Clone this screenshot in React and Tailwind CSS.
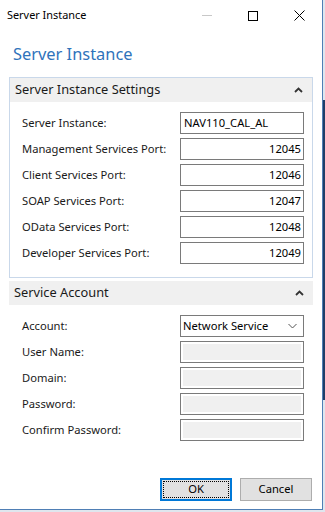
import React from 'react';

const font = { fontFamily: '"Noto Sans", "Open Sans", "Liberation Sans", sans-serif' };

const settings = [
  { label: 'Server Instance:', value: 'NAV110_CAL_AL', left: true },
  { label: 'Management Services Port:', value: '12045' },
  { label: 'Client Services Port:', value: '12046' },
  { label: 'SOAP Services Port:', value: '12047' },
  { label: 'OData Services Port:', value: '12048' },
  { label: 'Developer Services Port:', value: '12049' },
];

const accountFields = ['User Name:', 'Domain:', 'Password:', 'Confirm Password:'];

const ChevronUp = () => (
  <svg width="9" height="6" viewBox="0 0 9 6" className="mr-[9px]">
    <path d="M1 5 L4.5 1.5 L8 5" fill="none" stroke="#333" strokeWidth="1.8" />
  </svg>
);

const SectionHeader = ({ title }) => (
  <div className="flex h-[24px] items-center justify-between bg-[#f0f0f0] pl-[5px] text-[12.8px] text-[#1a1a1a]">
    <span>{title}</span>
    <ChevronUp />
  </div>
);

const Row = ({ label, children }) => (
  <div className="flex h-[22px] items-center">
    <span className="w-[158px] text-[11.2px] text-[#1a1a1a]">{label}</span>
    {children}
  </div>
);

const App = () => {
  return (
    <div className="relative h-[512px] w-[325px] bg-[#dfe6ee]" style={font}>
      <div className="flex h-[510px] w-[323px] flex-col border-r border-b border-[#4f7fb5] bg-white">
        {/* Title bar */}
        <div className="flex h-[31px] items-center pl-[7px] text-[10.9px] text-black">
          <span className="flex-1">Server Instance</span>
          <div className="flex h-full items-center">
            <div className="flex w-[46px] justify-center">
              <div className="h-px w-[10px] bg-[#c8c8c8]" />
            </div>
            <div className="flex w-[46px] justify-center">
              <div className="h-[10px] w-[10px] border border-black" />
            </div>
            <div className="flex w-[46px] justify-center">
              <svg width="11" height="11" viewBox="0 0 11 11">
                <path d="M0.5 0.5 L10.5 10.5 M10.5 0.5 L0.5 10.5" stroke="#000" strokeWidth="1" />
              </svg>
            </div>
          </div>
        </div>

        {/* Heading */}
        <div className="pl-[13px] pt-[11px] text-[16.4px] leading-[24px] text-[#2f73bb]">Server Instance</div>

        {/* Server Instance Settings */}
        <div className="ml-[9px] mt-[11px] w-[304px] border border-[#c9d8ea]">
          <SectionHeader title="Server Instance Settings" />
          <div className="flex flex-col gap-[4px] pb-[13px] pl-[12px] pr-[8px] pt-[10px]">
            {settings.map((s) => (
              <Row key={s.label} label={s.label}>
                <div
                  className={
                    'flex h-[22px] flex-1 items-center border border-[#7a7a7a] text-[11.2px] text-black ' +
                    (s.left ? 'justify-start pl-[3px]' : 'justify-end pr-[2px]')
                  }
                >
                  {s.value}
                </div>
              </Row>
            ))}
          </div>
        </div>

        {/* Service Account */}
        <div className="ml-[9px] mt-[3px] w-[304px]">
          <SectionHeader title="Service Account" />
          <div className="flex flex-col gap-[4px] pl-[13px] pr-[9px] pt-[10px]">
            <Row label="Account:">
              <div className="flex h-[22px] flex-1 items-center justify-between border border-[#7a7a7a] pl-[2px] pr-[6px] text-[11.2px] text-black">
                <span>Network Service</span>
                <svg width="9" height="6" viewBox="0 0 9 6">
                  <path d="M0.5 1 L4.5 5 L8.5 1" fill="none" stroke="#555" strokeWidth="1" />
                </svg>
              </div>
            </Row>
            {accountFields.map((f) => (
              <Row key={f} label={f}>
                <div className="h-[22px] flex-1 border border-[#7a7a7a] p-[2px]">
                  <div className="h-full w-full bg-[#f0f0f0]" />
                </div>
              </Row>
            ))}
          </div>
        </div>

        {/* Buttons */}
        <div className="mt-auto flex justify-end gap-[8px] pb-[8px] pr-[10px]">
          <button className="h-[23px] w-[72px] border-2 border-[#0078d7] bg-[#e1e1e1] p-px text-[11.2px] text-black">
            <div className="flex h-full w-full items-center justify-center border border-dotted border-black">OK</div>
          </button>
          <button className="flex h-[23px] w-[72px] items-center justify-center border border-[#adadad] bg-[#e1e1e1] text-[11.2px] text-black">
            Cancel
          </button>
        </div>
      </div>
      <div className="absolute right-0 top-[100px] h-[300px] w-[2px] bg-[#1f3e68]" />
    </div>
  );
};

export default App;
